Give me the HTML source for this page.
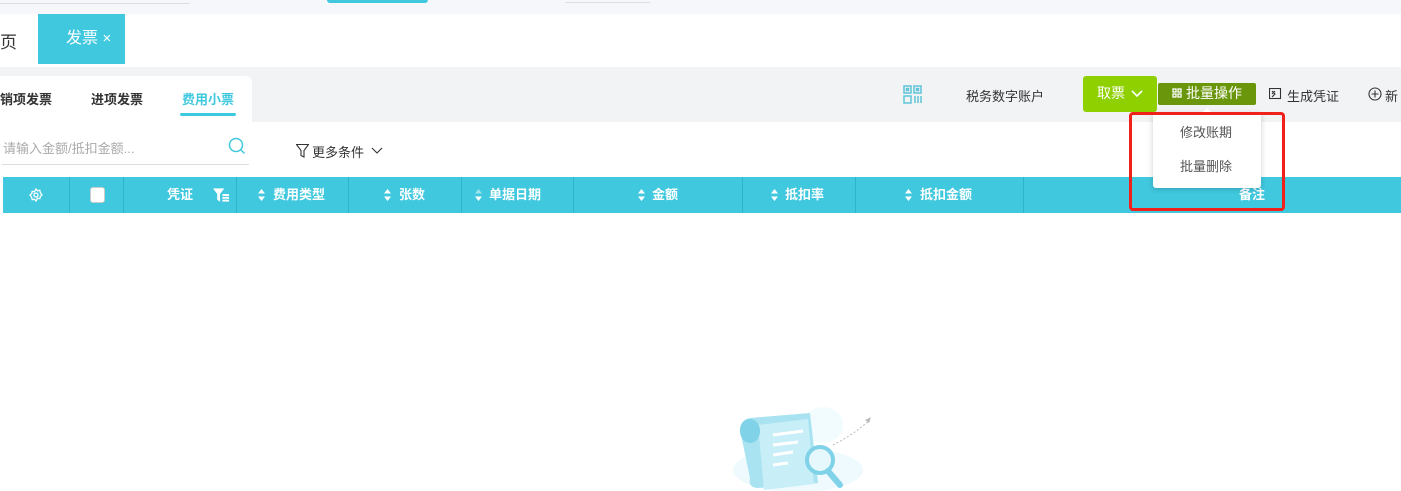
<!DOCTYPE html>
<html><head><meta charset="utf-8"><style>
*{margin:0;padding:0;box-sizing:border-box}
body{width:1401px;height:491px;overflow:hidden;background:#fff;font-family:"Liberation Sans","Noto Sans CJK SC",sans-serif;position:relative;font-size:13px;color:#333}
.a{position:absolute;white-space:nowrap}
.th{position:absolute;top:177px;height:36px;line-height:35px;color:#fff;font-weight:bold;font-size:13px}
.sep{position:absolute;top:177px;height:36px;width:1px;background:#2fb3c8}
.sort{position:absolute;top:189px;width:7px;height:12px}
</style></head><body>
<div class="a" style="left:0;top:0;width:1401px;height:14px;background:#f6f7fb"></div>
<div class="a" style="left:0;top:3px;width:190px;height:1px;background:#ddd"></div>
<div class="a" style="left:327px;top:0;width:101px;height:3px;background:#40c8de;border-radius:0 0 3px 3px"></div>
<div class="a" style="left:565px;top:2px;width:85px;height:1px;background:#ddd"></div>
<div class="a" style="left:0;top:28px;font-size:17px;color:#333">页</div>
<div class="a" style="left:38px;top:14px;width:87px;height:50px;background:#40c8de;color:#fff;font-size:16px;line-height:50px;padding-left:28px">发票 <span style="font-size:15px">×</span></div>
<div class="a" style="left:0;top:67px;width:1401px;height:55px;background:#f2f3f5"></div>
<div class="a" style="left:0;top:76px;width:252px;height:46px;background:#fff;border-radius:0 6px 0 0"></div>
<div class="a" style="left:0;top:89px;font-size:13px;font-weight:bold;color:#333">销项发票</div>
<div class="a" style="left:91px;top:89px;font-size:13px;font-weight:bold;color:#333">进项发票</div>
<div class="a" style="left:182px;top:89px;font-size:13px;font-weight:bold;color:#40c8de">费用小票</div>
<div class="a" style="left:180px;top:113px;width:56px;height:3px;background:#40c8de;border-radius:2px"></div>
<svg class="a" style="left:903px;top:85px" width="19" height="19" viewBox="0 0 19 19" fill="none" stroke="#5ec4d8" stroke-width="1.5"><rect x="1" y="1" width="7" height="7"/><rect x="11" y="1" width="7" height="7"/><rect x="1" y="11" width="7" height="7"/><rect x="3.5" y="3.5" width="2" height="2"/><rect x="13.5" y="3.5" width="2" height="2"/><path d="M12 11v7M15 11v7M18 11v7"/></svg>
<div class="a" style="left:966px;top:86px;font-size:13px;color:#333">税务数字账户</div>
<div class="a" style="left:1083px;top:76px;width:74px;height:36px;background:#8fd000;border-radius:3px;color:#fff;font-size:14px;line-height:35px;padding-left:14px">取票 <svg width="12" height="8" viewBox="0 0 12 8" style="margin-left:2px"><path d="M1 1l5 5 5-5" stroke="#fff" stroke-width="1.6" fill="none"/></svg></div>
<div class="a" style="left:1158px;top:83px;width:98px;height:22px;background:#6a960c;border-radius:2px;color:#fff;font-size:14px;line-height:21px;padding-left:14px"><svg width="10" height="10" viewBox="0 0 10 10" style="margin-right:4px" fill="none" stroke="#fff" stroke-width="1.3"><rect x="1" y="1" width="3" height="3"/><rect x="6" y="1" width="3" height="3"/><rect x="1" y="6" width="3" height="3"/><rect x="6" y="6" width="3" height="3"/></svg>批量操作</div>
<svg class="a" style="left:1269px;top:88px" width="13" height="12" viewBox="0 0 13 12" fill="none" stroke="#333" stroke-width="1.1"><rect x="0.5" y="0.5" width="11" height="10"/><path d="M3 3l3 3-3 3M6 3l-3 3"/></svg>
<div class="a" style="left:1287px;top:86px;font-size:13px">生成凭证</div>
<svg class="a" style="left:1368px;top:87px" width="14" height="14" viewBox="0 0 14 14" fill="none" stroke="#333" stroke-width="1.1"><circle cx="7" cy="7" r="6"/><path d="M7 3.5v7M3.5 7h7"/></svg>
<div class="a" style="left:1385px;top:86px;font-size:13px">新</div>
<div class="a" style="left:3px;top:138px;font-size:13px;color:#aaa">请输入金额/抵扣金额...</div>
<svg class="a" style="left:228px;top:137px" width="18" height="18" viewBox="0 0 18 18" fill="none" stroke="#40c8de" stroke-width="1.5"><circle cx="8" cy="8" r="6.5"/><path d="M12.5 12.5l4 4"/></svg>
<div class="a" style="left:2px;top:164px;width:247px;height:1px;background:#ddd"></div>
<svg class="a" style="left:296px;top:144px" width="13" height="14" viewBox="0 0 13 14" fill="none" stroke="#333" stroke-width="1.1"><path d="M0.5 0.5h12l-4.5 6v6.5l-3-1.5v-5z"/></svg>
<div class="a" style="left:312px;top:142px;font-size:13px">更多条件</div>
<svg class="a" style="left:371px;top:147px" width="12" height="8" viewBox="0 0 12 8"><path d="M1 1l5 5 5-5" stroke="#333" stroke-width="1.1" fill="none"/></svg>
<div class="a" style="left:3px;top:177px;width:1398px;height:36px;background:#40c8de"></div>
<div class="sep" style="left:69px"></div><div class="sep" style="left:123px"></div><div class="sep" style="left:236px"></div><div class="sep" style="left:348px"></div><div class="sep" style="left:461px"></div><div class="sep" style="left:573px"></div><div class="sep" style="left:742px"></div><div class="sep" style="left:855px"></div><div class="sep" style="left:1023px"></div>
<svg class="a" style="left:29px;top:188px" width="14" height="14" viewBox="0 0 14 14" fill="none" stroke="#fff" stroke-width="1.3"><circle cx="7" cy="7" r="2"/><path d="M7 1l1.5 1.8 2.3-.5.5 2.3L13 7l-1.7 1.4-.5 2.3-2.3-.5L7 13l-1.5-1.8-2.3.5-.5-2.3L1 7l1.7-1.4.5-2.3 2.3.5z"/></svg>
<div class="a" style="left:90px;top:187px;width:15px;height:16px;background:#fff;border-radius:3px;border:1px solid #ccc"></div>
<div class="th" style="left:167px">凭证</div>
<svg class="a" style="left:213px;top:188px" width="16" height="14" viewBox="0 0 17 14" fill="#fff"><path d="M0 0h12l-4.5 6v8l-3-2v-6z"/><rect x="10" y="6" width="7" height="2"/><rect x="10" y="9" width="7" height="2"/><rect x="10" y="12" width="7" height="2"/></svg>
<svg class="sort" style="left:258px" viewBox="0 0 7 12" fill="#fff"><path d="M3.5 0L7 4.5H0zM0 7.5h7L3.5 12z"/></svg><div class="th" style="left:273px">费用类型</div>
<svg class="sort" style="left:384px" viewBox="0 0 7 12" fill="#fff"><path d="M3.5 0L7 4.5H0zM0 7.5h7L3.5 12z"/></svg><div class="th" style="left:399px">张数</div>
<svg class="sort" style="left:475px" viewBox="0 0 7 12"><path d="M3.5 0L7 4.5H0z" fill="#9fe3ee"/><path d="M0 7.5h7L3.5 12z" fill="#fff"/></svg><div class="th" style="left:489px">单据日期</div>
<svg class="sort" style="left:638px" viewBox="0 0 7 12" fill="#fff"><path d="M3.5 0L7 4.5H0zM0 7.5h7L3.5 12z"/></svg><div class="th" style="left:652px">金额</div>
<svg class="sort" style="left:771px" viewBox="0 0 7 12" fill="#fff"><path d="M3.5 0L7 4.5H0zM0 7.5h7L3.5 12z"/></svg><div class="th" style="left:785px">抵扣率</div>
<svg class="sort" style="left:905px" viewBox="0 0 7 12" fill="#fff"><path d="M3.5 0L7 4.5H0zM0 7.5h7L3.5 12z"/></svg><div class="th" style="left:920px">抵扣金额</div>
<div class="th" style="left:1239px">备注</div>
<div class="a" style="left:1153px;top:113px;width:108px;height:75px;background:#fff;border-radius:3px;box-shadow:0 1px 6px rgba(0,0,0,.2)"></div>
<div class="a" style="left:1202px;top:108px;width:0;height:0;border:5px solid transparent;border-bottom-color:#fff;border-top:0"></div>
<div class="a" style="left:1180px;top:122px;font-size:13px;color:#555">修改账期</div>
<div class="a" style="left:1180px;top:156px;font-size:13px;color:#555">批量删除</div>
<div class="a" style="left:1129px;top:112px;width:156px;height:99px;border:3px solid #f0211b;border-radius:4px"></div>
<svg class="a" style="left:728px;top:385px" width="150" height="106" viewBox="0 0 150 106">
<ellipse cx="70" cy="85" rx="65" ry="22" fill="#eefafd"/>
<ellipse cx="95" cy="40" rx="20" ry="18" fill="#f2fbfd"/>
<path d="M12 45q0-10 10-12l60-5 8 70-60 5q-10 0-8-10z" fill="#a9e3f1"/>
<path d="M30 40l50-6 6 65-50 6z" fill="#c8eef7"/>
<ellipse cx="22" cy="46" rx="10" ry="12" fill="#7fd2e8"/>
<path d="M45 50l30-4M45 60l25-3M45 70l20-3M45 80l15-2" stroke="#fff" stroke-width="3"/>
<circle cx="92" cy="75" r="13" fill="#e6f8fc" stroke="#7fd2e8" stroke-width="4"/>
<path d="M100 86l12 14" stroke="#7fd2e8" stroke-width="6" stroke-linecap="round"/>
<path d="M105 60q20-10 37-25" stroke="#bbb" stroke-dasharray="2 2" fill="none"/>
<path d="M137 35l6-3-2 6z" fill="#bbb"/>
</svg>
</body></html>
